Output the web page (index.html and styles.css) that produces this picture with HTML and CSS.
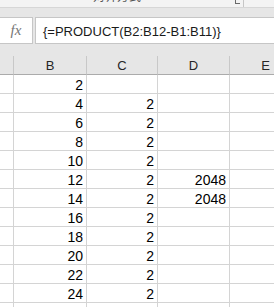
FILE: index.html
```html
<!DOCTYPE html>
<html lang="zh-CN">
<head>
  <meta charset="UTF-8" />
  <meta name="viewport" content="width=device-width, initial-scale=1.0"/>
  <title>Sheet</title>
  <link rel="stylesheet" href="styles.css">
</head>
<body>

<div class="ribbon">
  <span class="group-label">对齐方式</span>
  <svg class="launcher" width="6" height="6" viewBox="0 0 6 6">
    <path d="M0 0H1V4H5V5H0Z M2 -2L5 1V-2Z" fill="#6a6a6a"/>
  </svg>
  <span class="group-sep"></span>
</div>

<div class="fbar">
  <div class="fx">fx</div>
  <div class="formula">{=PRODUCT(B2:B12-B1:B11)}</div>
</div>

<div class="sheet">
  <div class="hd"></div>
  <div class="hd">B</div>
  <div class="hd">C</div>
  <div class="hd">D</div>
  <div class="hd">E</div>

  <div class="cell"></div><div class="cell">2</div><div class="cell"></div><div class="cell"></div><div class="cell"></div>
  <div class="cell"></div><div class="cell">4</div><div class="cell">2</div><div class="cell"></div><div class="cell"></div>
  <div class="cell"></div><div class="cell">6</div><div class="cell">2</div><div class="cell"></div><div class="cell"></div>
  <div class="cell"></div><div class="cell">8</div><div class="cell">2</div><div class="cell"></div><div class="cell"></div>
  <div class="cell"></div><div class="cell">10</div><div class="cell">2</div><div class="cell"></div><div class="cell"></div>
  <div class="cell"></div><div class="cell">12</div><div class="cell">2</div><div class="cell">2048</div><div class="cell"></div>
  <div class="cell"></div><div class="cell">14</div><div class="cell">2</div><div class="cell">2048</div><div class="cell"></div>
  <div class="cell"></div><div class="cell">16</div><div class="cell">2</div><div class="cell"></div><div class="cell"></div>
  <div class="cell"></div><div class="cell">18</div><div class="cell">2</div><div class="cell"></div><div class="cell"></div>
  <div class="cell"></div><div class="cell">20</div><div class="cell">2</div><div class="cell"></div><div class="cell"></div>
  <div class="cell"></div><div class="cell">22</div><div class="cell">2</div><div class="cell"></div><div class="cell"></div>
  <div class="cell"></div><div class="cell">24</div><div class="cell">2</div><div class="cell"></div><div class="cell"></div>
  <div class="cell"></div><div class="cell"></div><div class="cell"></div><div class="cell"></div><div class="cell"></div>
</div>

</body>
</html>
```

FILE: styles.css
```css
body {
  margin: 0;
  width: 274px;
  height: 307px;
  overflow: hidden;
  font-family: "Liberation Sans", Arial, sans-serif;
  background: #ffffff;
}
.ribbon {
  position: relative;
  height: 7px;
  background: #f3f3f3;
  border-bottom: 1px solid #d6d6d6;
  overflow: hidden;
}
.group-label {
  position: absolute;
  left: 93px;
  top: -11px;
  font-family: "Noto Sans CJK SC", sans-serif;
  font-size: 12px;
  line-height: 14px;
  color: #555555;
}
.launcher {
  position: absolute;
  left: 235px;
  top: -1px;
}
.group-sep {
  position: absolute;
  left: 243px;
  top: 0;
  width: 1px;
  height: 7px;
  background: #c6c6c6;
}
.fbar {
  display: flex;
  background: #e6e6e6;
  padding: 9px 0 12px 0;
}
.fx {
  box-sizing: border-box;
  width: 33px;
  height: 27px;
  background: #ffffff;
  border: 1px solid #c6c6c6;
  border-left: none;
  font-family: "Liberation Serif", serif;
  font-style: italic;
  font-size: 15px;
  line-height: 25px;
  color: #767676;
  text-align: center;
}
.formula {
  box-sizing: border-box;
  flex: 1;
  height: 27px;
  margin-left: 2px;
  background: #ffffff;
  border: 1px solid #c6c6c6;
  border-right: none;
  padding: 3px 0 0 7px;
  font-size: 13px;
  line-height: 22px;
  color: #1a1a1a;
  white-space: nowrap;
}
.sheet {
  display: grid;
  grid-template-columns: 14px 73px 71px 72px 72px;
  grid-auto-rows: 19px;
}
.hd {
  box-sizing: border-box;
  background: #e6e6e6;
  border-right: 1px solid #c8c8c8;
  border-bottom: 1px solid #ababab;
  padding-top: 2px;
  font-size: 13px;
  line-height: 15px;
  color: #262626;
  text-align: center;
}
.cell {
  box-sizing: border-box;
  border-right: 1px solid #d4d4d4;
  border-bottom: 1px solid #d4d4d4;
  padding: 3px 3px 0 0;
  font-size: 14px;
  line-height: 15px;
  color: #000000;
  text-align: right;
}
```
